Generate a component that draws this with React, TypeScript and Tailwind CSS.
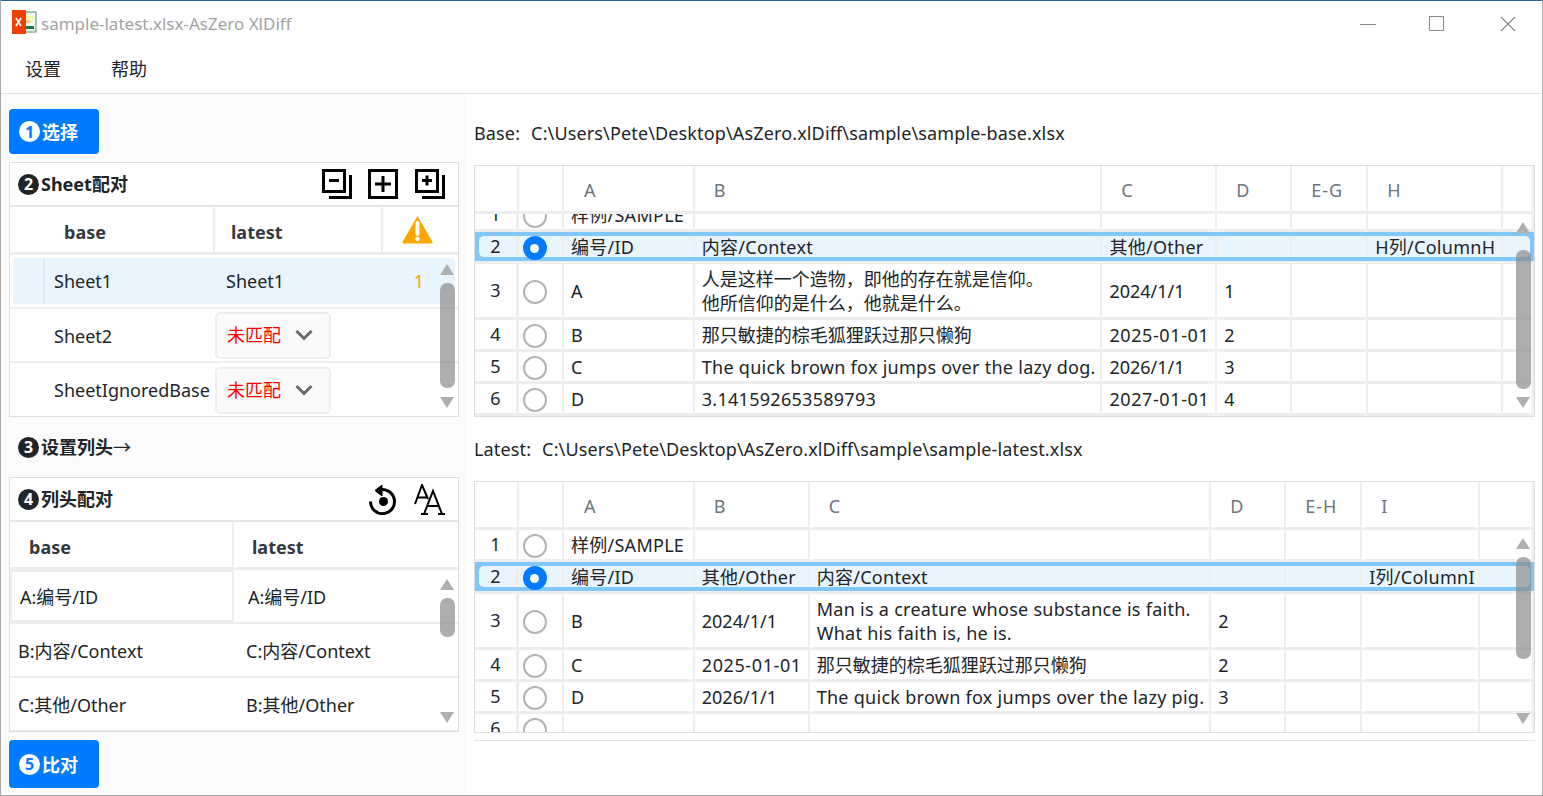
import type { ReactNode } from "react";

const font = { fontFamily: '"Noto Sans", "Noto Sans CJK SC", sans-serif' };

const Step = ({ n, light }: { n: number; light?: boolean }) => (
  <span
    className={`flex h-[21px] w-[21px] shrink-0 items-center justify-center rounded-full text-[16px] font-bold leading-none ${
      light ? "bg-white text-[#007bff]" : "bg-[#212529] text-white"
    }`}
  >
    {n}
  </span>
);

const BlueButton = ({ n, label, h }: { n: number; label: string; h: string }) => (
  <button className={`flex w-[90px] items-center gap-[2px] rounded-[4px] bg-[#007bff] pl-[10px] text-[18px] font-bold text-white ${h}`}>
    <Step n={n} light />
    <span className="pt-[2px]">{label}</span>
  </button>
);

const Scrollbar = ({ x, up, top, bottom, down }: { x: string; up: string; top: number; bottom: number; down: string }) => (
  <>
    <div className={`absolute h-0 w-0 border-x-[7.5px] border-b-[11px] border-x-transparent border-b-[#b0b0b0] ${x} ${up}`} />
    <div
      className={`absolute w-[15px] rounded-[7px] bg-[#8c8c8c]/70 ${x}`}
      style={{ top, height: bottom - top }}
    />
    <div className={`absolute h-0 w-0 border-x-[7.5px] border-t-[11px] border-x-transparent border-t-[#b0b0b0] ${x} ${down}`} />
  </>
);

const Radio = ({ on }: { on?: boolean }) =>
  on ? (
    <span className="relative z-10 mt-[3px] flex h-[24px] w-[24px] items-center justify-center rounded-full bg-[#007bff]">
      <span className="h-[9px] w-[9px] rounded-full bg-white" />
    </span>
  ) : (
    <span className="mt-[3px] h-[24px] w-[24px] rounded-full border-2 border-[#b4b4b4] bg-white" />
  );

const Zh = ({ children }: { children: ReactNode }) => <span className="tracking-normal">{children}</span>;
const DashDate = ({ children }: { children: ReactNode }) => <span className="tracking-[0.6px]">{children}</span>;

type Row = { h: string; n: number; on?: boolean; cells: ReactNode[] };

const SelectedFrame = () => (
  <div className="pointer-events-none absolute inset-0 overflow-hidden">
    <div className="absolute inset-[4px] rounded-[5px] shadow-[0_0_0_9px_rgba(110,190,248,0.85)]" />
  </div>
);

const DataTable = ({
  widths,
  heads,
  rows,
  offset,
  children,
}: {
  widths: number[];
  heads: string[];
  rows: Row[];
  offset: string;
  children: ReactNode;
}) => (
  <div className="relative h-[252px] border border-[#dedede] bg-white text-[18px] text-[#212529]">
    <div className="flex h-[48px] border-b-[3px] border-[#eeeeee]">
      <div className="w-[44px] border-r-2 border-[#eeeeee]" />
      <div className="w-[45px] border-r-2 border-[#eeeeee]" />
      {widths.map((w, i) => (
        <div
          key={i}
          className={`flex items-center border-r-2 border-[#eeeeee] pt-[3px] tracking-[1px] text-[#6c757d] ${
            i === 0 ? "pl-[20px]" : "pl-[19px]"
          }`}
          style={{ width: w }}
        >
          {heads[i]}
        </div>
      ))}
    </div>
    <div className="h-[202px] overflow-hidden">
      <div className={offset}>
        {rows.map((r) => (
          <div
            key={r.n}
            className={`relative flex border-b-[3px] border-[#eeeeee] ${r.h} ${r.on ? "bg-[#e8f4fe]" : ""}`}
          >
            <div className="flex w-[44px] items-center justify-center border-r-[3px] border-[#eeeeee]">{r.n}</div>
            <div className="flex w-[45px] items-center justify-start border-r-2 border-[#eeeeee] pl-[4px]">
              <Radio on={r.on} />
            </div>
            {widths.map((w, i) => (
              <div
                key={i}
                className="flex items-center border-r-2 border-[#eeeeee] pl-[7px] leading-[24px] tracking-[0.28px] whitespace-nowrap"
                style={{ width: w }}
              >
                <div>{r.cells[i]}</div>
              </div>
            ))}
            {r.on && <SelectedFrame />}
          </div>
        ))}
      </div>
    </div>
    {children}
  </div>
);

const Frame = ({ plus, minus }: { plus?: boolean; minus?: boolean }) => (
  <svg width="30" height="30" viewBox="0 0 30 30" fill="none" stroke="#000" strokeWidth="3">
    <rect x="1.5" y="1.5" width="21" height="21" />
    <path d="M28.5 6v22.5H7" />
    {minus && <path d="M7 11.5h10" />}
    {plus && <path d="M7 11.5h10M12 6.5v10" />}
  </svg>
);

const Dropdown = () => (
  <div className="flex h-[47px] w-[116px] items-center justify-between rounded-[5px] border-2 border-[#eeeeee] bg-[#fafafa] pl-[10px] pr-[16px] text-[18px] text-[#ff0000]">
    <span className="pt-[1px]">未匹配</span>
    <svg width="18" height="12" viewBox="0 0 18 12" fill="none" stroke="#6b6b6b" strokeWidth="3">
      <path d="M1.5 2l7.5 7.5L16.5 2" />
    </svg>
  </div>
);

const baseRows: Row[] = [
  { h: "h-[32px]", n: 1, cells: ["样例/SAMPLE"] },
  { h: "h-[32px]", n: 2, on: true, cells: ["编号/ID", "内容/Context", "其他/Other", "", "", "H列/ColumnH"] },
  {
    h: "h-[56px]",
    n: 3,
    cells: [
      "A",
      <Zh>人是这样一个造物，即他的存在就是信仰。<br />他所信仰的是什么，他就是什么。</Zh>,
      <Zh>2024/1/1</Zh>,
      "1",
    ],
  },
  { h: "h-[32px]", n: 4, cells: ["B", <Zh>那只敏捷的棕毛狐狸跃过那只懒狗</Zh>, <DashDate>2025-01-01</DashDate>, "2"] },
  { h: "h-[32px]", n: 5, cells: ["C", "The quick brown fox jumps over the lazy dog.", <Zh>2026/1/1</Zh>, "3"] },
  { h: "h-[32px]", n: 6, cells: ["D", "3.141592653589793", <DashDate>2027-01-01</DashDate>, "4"] },
];

const latestRows: Row[] = [
  { h: "h-[32px]", n: 1, cells: ["样例/SAMPLE"] },
  { h: "h-[32px]", n: 2, on: true, cells: ["编号/ID", "其他/Other", "内容/Context", "", "", "I列/ColumnI"] },
  {
    h: "h-[56px]",
    n: 3,
    cells: ["B", <Zh>2024/1/1</Zh>, <>Man is a creature whose substance is faith.<br />What his faith is, he is.</>, "2"],
  },
  { h: "h-[32px]", n: 4, cells: ["C", <DashDate>2025-01-01</DashDate>, <Zh>那只敏捷的棕毛狐狸跃过那只懒狗</Zh>, "2"] },
  { h: "h-[32px]", n: 5, cells: ["D", <Zh>2026/1/1</Zh>, "The quick brown fox jumps over the lazy pig.", "3"] },
  { h: "h-[32px]", n: 6, cells: [] },
];

const SheetRow = ({ children }: { children: ReactNode }) => (
  <div className="flex h-[54px] items-center border-b-2 border-[#eeeeee]">{children}</div>
);

const MapRow = ({ a, b, first }: { a: string; b: string; first?: boolean }) => (
  <div className="flex h-[54px] items-center border-b-2 border-[#eeeeee] last:border-b-0">
    <div className={`flex h-full w-[224px] items-center pl-[8px] pt-[2px] ${first ? "border-2 border-[#eeeeee]" : ""}`}>
      {a}
    </div>
    <div className={`flex h-full flex-1 items-center pt-[2px] ${first ? "pl-[14px]" : "pl-[12px]"}`}>{b}</div>
  </div>
);

export default function App() {
  return (
    <div
      className="flex h-[796px] w-[1543px] flex-col overflow-hidden border-x border-b border-[#a8a8a8] border-t-0 bg-white"
      style={font}
    >
      <div className="h-px shrink-0 bg-[#2a6494]" />
      {/* title bar */}
      <div className="flex h-[45px] shrink-0 items-center pl-[11px] text-[17px] text-[#a3a3a3]">
        <svg width="25" height="24" viewBox="0 0 25 24" className="mb-[3px] shrink-0">
          <rect x="12" y="2" width="12" height="20" fill="#f4f8f2" stroke="#4f8f6b" strokeWidth="1" />
          <rect x="14" y="6" width="8" height="3" fill="#f3f3a0" />
          <rect x="14" y="10" width="5" height="3" fill="#f7d98a" />
          <rect x="14" y="16" width="8" height="3" fill="#187a3c" />
          <rect x="0" y="0" width="14" height="24" fill="#f04000" />
          <path d="M4 8l5 8M9 8l-5 8" stroke="#fff" strokeWidth="1.7" />
        </svg>
        <span className="ml-[4px]">sample-latest.xlsx-AsZero XlDiff</span>
        <div className="ml-auto flex items-center">
          <svg width="16" height="16" viewBox="0 0 16 16" className="mr-[53px]" stroke="#8a8a8a">
            <path d="M0 8.5h16" />
          </svg>
          <svg width="16" height="16" viewBox="0 0 16 16" className="mr-[55px]" fill="none" stroke="#8a8a8a">
            <rect x="0.5" y="0.5" width="14" height="14" />
          </svg>
          <svg width="16" height="16" viewBox="0 0 16 16" className="mr-[26px]" stroke="#8a8a8a" strokeWidth="1.1">
            <path d="M1 1l14 14M15 1L1 15" />
          </svg>
        </div>
      </div>
      {/* menu */}
      <div className="flex h-[48px] shrink-0 items-center gap-[50px] border-b border-[#e3e3e3] pl-[24px] text-[18px] text-[#212529]">
        <span>设置</span>
        <span>帮助</span>
      </div>

      <div className="flex min-h-0 flex-1">
        {/* left column */}
        <div className="w-[466px] shrink-0 bg-[#fbfbfb] pl-[8px] pr-[8px] pt-[15px] text-[18px] text-[#212529]">
          <BlueButton n={1} label="选择" h="h-[45px]" />

          <div className="relative mt-[8px] h-[255px] overflow-hidden border border-[#dedede] bg-white">
            <div className="flex h-[44px] items-center gap-[2px] border-b-2 border-[#e6e6e6] pl-[8px] font-bold">
              <Step n={2} />
              <span className="pt-[1px]">Sheet配对</span>
              <div className="ml-auto mr-[13px] flex items-center gap-[16px]">
                <Frame minus />
                <svg width="30" height="30" viewBox="0 0 30 30" fill="none" stroke="#000" strokeWidth="3">
                  <rect x="1.5" y="1.5" width="27" height="27" />
                  <path d="M7 15h16M15 7v16" />
                </svg>
                <span className="ml-px">
                  <Frame plus />
                </span>
              </div>
            </div>
            <div className="flex h-[48px] border-b-[3px] border-[#eeeeee] font-bold text-[#343a40]">
              <div className="flex w-[205px] items-center border-r-2 border-[#eeeeee] pl-[54px] pt-[5px]">base</div>
              <div className="flex w-[168px] items-center border-r-2 border-[#eeeeee] pl-[16px] pt-[5px]">latest</div>
              <div className="flex flex-1 items-center pl-[19px]">
                <svg width="31" height="29" viewBox="0 0 31 29">
                  <path d="M15.5 1L30.5 27a1 1 0 0 1-1 1.5h-28a1 1 0 0 1-1-1.5z" fill="#ffa500" />
                  <path d="M15.5 8v11" stroke="#fff" strokeWidth="4" strokeLinecap="round" />
                  <circle cx="15.5" cy="24" r="2.3" fill="#fff" />
                </svg>
              </div>
            </div>
            <SheetRow>
              <div className="relative mx-[3px] flex h-[46px] flex-1 items-center rounded-[4px] bg-[#e8f4fe]">
                <div className="h-full w-[32px] shrink-0 border-r-2 border-[#e2e8ee]" />
                <span className="ml-[9px] w-[172px] shrink-0">Sheet1</span>
                <span>Sheet1</span>
                <span className="ml-auto mr-[31px] text-[#ffa500]">1</span>
              </div>
            </SheetRow>
            <SheetRow>
              <span className="ml-[44px] w-[161px] shrink-0 pt-[2px]">Sheet2</span>
              <Dropdown />
            </SheetRow>
            <div className="flex h-[54px] items-center">
              <span className="ml-[44px] w-[161px] shrink-0 whitespace-nowrap">SheetIgnoredBase</span>
              <Dropdown />
            </div>
            <Scrollbar x="left-[430px]" up="top-[101px]" top={120} bottom={225} down="top-[234px]" />
          </div>

          <div className="flex h-[60px] items-center gap-[2px] pl-[9px] font-bold">
            <Step n={3} />
            <span>
              设置列头<span className="font-normal">→</span>
            </span>
          </div>

          <div className="relative h-[255px] overflow-hidden border border-[#dedede] bg-white">
            <div className="flex h-[44px] items-center gap-[2px] border-b-2 border-[#e6e6e6] pl-[8px] font-bold">
              <Step n={4} />
              列头配对
              <div className="ml-auto mr-[13px] flex items-center gap-[16px]">
                <svg width="29" height="31" viewBox="0 0 29 31" fill="none" stroke="#000" strokeWidth="3">
                  <path d="M9 6.5a12 12 0 1 1-7.5 11" />
                  <path d="M13 1v11L6 6.5z" fill="#000" strokeWidth="1" />
                  <circle cx="14.5" cy="17.5" r="4.5" fill="#000" stroke="none" />
                </svg>
                <svg width="31" height="31" viewBox="0 0 31 31" fill="none" stroke="#000" strokeWidth="2">
                  <path d="M1 20L8 1l6 14M3.5 13.5h9.5" />
                  <path d="M10 30l9-23 9 23M13 22h12M7 30h7M24 30h7" />
                </svg>
              </div>
            </div>
            <div className="flex h-[48px] border-b-[3px] border-[#eeeeee] font-bold text-[#343a40]">
              <div className="flex w-[224px] items-center border-r-2 border-[#eeeeee] pl-[19px] pt-[5px]">base</div>
              <div className="flex flex-1 items-center pl-[18px] pt-[5px]">latest</div>
            </div>
            <MapRow first a="A:编号/ID" b="A:编号/ID" />
            <MapRow a="B:内容/Context" b="C:内容/Context" />
            <MapRow a="C:其他/Other" b="B:其他/Other" />
            <Scrollbar x="left-[430px]" up="top-[101px]" top={120} bottom={159} down="top-[234px]" />
          </div>

          <div className="mt-[8px]">
            <BlueButton n={5} label="比对" h="h-[48px]" />
          </div>
        </div>

        {/* right column */}
        <div className="min-w-0 flex-1 pl-[7px] pr-[7px] text-[18px] tracking-[0.14px] text-[#212529]">
          <div className="flex h-[71px] items-center gap-[11px] pt-[7px]">
            <span>Base:</span>
            <span>C:\Users\Pete\Desktop\AsZero.xlDiff\sample\sample-base.xlsx</span>
          </div>
          <DataTable
            widths={[131, 408, 115, 75, 76, 135, 31]}
            heads={["A", "B", "C", "D", "E-G", "H", ""]}
            rows={baseRows}
            offset="-mt-[14px]"
          >
            <Scrollbar x="left-[1041px]" up="top-[56px]" top={84} bottom={223} down="top-[231px]" />
          </DataTable>
          <div className="flex h-[64px] items-center gap-[11px]">
            <span>Latest:</span>
            <span>C:\Users\Pete\Desktop\AsZero.xlDiff\sample\sample-latest.xlsx</span>
          </div>
          <DataTable
            widths={[131, 115, 402, 75, 76, 118, 54]}
            heads={["A", "B", "C", "D", "E-H", "I", ""]}
            rows={latestRows}
            offset=""
          >
            <Scrollbar x="left-[1041px]" up="top-[56px]" top={75} bottom={177} down="top-[231px]" />
          </DataTable>
          <div className="mt-[7px] border-t border-[#e3e3e3]" />
        </div>
      </div>
    </div>
  );
}
